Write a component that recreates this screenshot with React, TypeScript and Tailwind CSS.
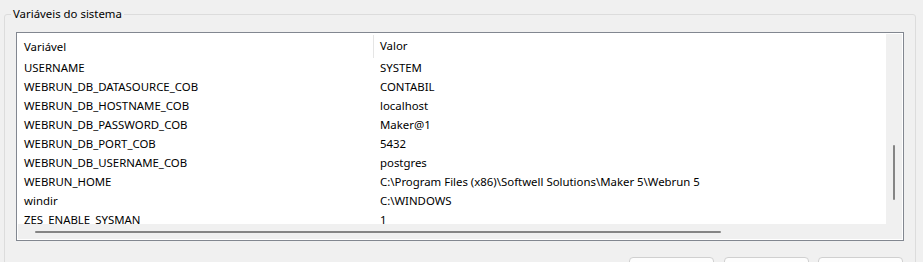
import React from "react";

const rows = [
  { name: "USERNAME", value: "SYSTEM" },
  { name: "WEBRUN_DB_DATASOURCE_COB", value: "CONTABIL" },
  { name: "WEBRUN_DB_HOSTNAME_COB", value: "localhost" },
  { name: "WEBRUN_DB_PASSWORD_COB", value: "Maker@1" },
  { name: "WEBRUN_DB_PORT_COB", value: "5432" },
  { name: "WEBRUN_DB_USERNAME_COB", value: "postgres" },
  { name: "WEBRUN_HOME", value: "C:\\Program Files (x86)\\Softwell Solutions\\Maker 5\\Webrun 5" },
  { name: "windir", value: "C:\\WINDOWS" },
  { name: "ZES_ENABLE_SYSMAN", value: "1" },
];

export default function App() {
  return (
    <div className="w-[923px] h-[262px] overflow-hidden bg-[#f0f0f0] pt-[14px] pl-[4px] font-['Noto_Sans',sans-serif] text-[11.4px] text-black">
      {/* Group box */}
      <div className="relative w-[912px] h-[300px] border border-[#dcdcdc] rounded-[3px]">
        <span className="absolute -top-[9px] left-[6px] px-[2px] bg-[#f0f0f0] leading-[16px]">
          Variáveis do sistema
        </span>

        {/* List view */}
        <div className="ml-[11px] mt-[17px] w-[888px] h-[209px] border border-[#828790] bg-white p-px flex flex-col">
          <div className="flex h-[190px]">
            <div className="flex-1 overflow-hidden">
              <div className="flex h-[24px] items-center">
                <div className="w-[356px] h-[23px] mt-px pl-[6px] flex items-center border-r border-[#e5e5e5]">Variável</div>
                <div className="pl-[6px]">Valor</div>
              </div>
              {rows.map((r) => (
                <div key={r.name} className="flex h-[19px] items-center whitespace-nowrap">
                  <div className="w-[356px] pl-[6px]">{r.name}</div>
                  <div className="pl-[6px]">{r.value}</div>
                </div>
              ))}
            </div>
            {/* vertical scrollbar */}
            <div className="w-[16px] bg-[#f0f0f0] pt-[111px] pl-[7px]">
              <div className="w-[2px] h-[55px] rounded-full bg-[#858585]" />
            </div>
          </div>
          {/* horizontal scrollbar */}
          <div className="h-[15px] bg-[#f0f0f0] pt-[7px] pl-[17px]">
            <div className="w-[686px] h-[2px] rounded-full bg-[#858585]" />
          </div>
        </div>

        {/* Buttons */}
        <div className="flex mt-[16px] ml-[624px]">
          <div className="w-[85px] h-[24px] mr-[10px] rounded-[4px] border border-[#d0d0d0] bg-[#fdfdfd]" />
          <div className="w-[85px] h-[24px] mr-[9px] rounded-[4px] border border-[#d0d0d0] bg-[#fdfdfd]" />
          <div className="w-[85px] h-[24px] rounded-[4px] border border-[#d0d0d0] bg-[#fdfdfd]" />
        </div>
      </div>
    </div>
  );
}
